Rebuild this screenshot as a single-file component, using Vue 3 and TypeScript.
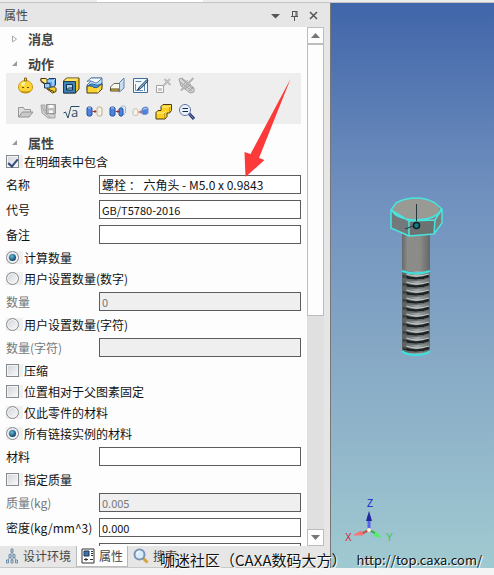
<script setup lang="ts">
import { ref } from 'vue'

interface Shape {
  d: string
  fill?: string
  stroke?: string
  w?: number
}
interface Tool {
  label: string
  glyph?: string
  shapes: Shape[]
}
interface Row {
  id: string
  kind: 'check' | 'radio' | 'text'
  label: string
  value?: string
  checked?: boolean
  disabled?: boolean
  group?: string
  code?: boolean
}

const NAVY = '#1f3a5c'
const OLIVE = '#4a3a10'
const GREY = '#a2a2a2'

const toolRows: Tool[][] = [
  [
    {
      label: '零件',
      shapes: [
        { d: 'M1 10.500l3-1.500v3zM16 10.500l-3-1.500v3z', fill: '#e8c021', stroke: '#8a6a10', w: 1 },
        { d: 'M8.500 3.500C4.500 3.500 1.500 6.500 1.500 10c0 4 3 6 7 6s7-2 7-6c0-3.500-3-6.500-7-6.500z', fill: '#fbd335', stroke: '#c79a1c', w: 1 },
        { d: 'M3 13c3 2 8 2 11 0-1 2-2.500 3-5.500 3S4 15 3 13z', fill: '#b98a12' },
        { d: 'M4 8C4.500 6 6.500 4.800 8.500 4.800L7 9z', fill: '#fff3a8' },
        { d: 'M7.500 1h2v3h-2z', fill: '#fbd335', stroke: '#8a6a10', w: 1 },
        { d: 'M5 10h2v1H5zM10 10h2v1h-2z', fill: '#6b4d08' },
      ],
    },
    {
      label: '装配',
      shapes: [
        { d: 'M1 1.500h5l2 2 8 8v3L12.500 16 7 12V9L1 4.500z', fill: '#f6cf2e', stroke: OLIVE, w: 1 },
        { d: 'M1 1.500h5l2 2v3H5L1 4z', fill: '#ffe873', stroke: OLIVE, w: 1 },
        { d: 'M7 3.500l2-2h6.500V8l-2 2H7z', fill: '#5da5ee', stroke: NAVY, w: 1 },
        { d: 'M7.500 4H13v5M13 4l2-2', stroke: '#d7ebff', w: 1 },
        { d: 'M4.500 6.500H10v4.500H4.500z', fill: '#9ccbf8', stroke: NAVY, w: 1 },
        { d: 'M8 12l6 2.500', stroke: OLIVE, w: 1 },
      ],
    },
    {
      label: '抽壳',
      shapes: [
        { d: 'M.5 4l3-3H16v11l-3.500 4H.5z', fill: '#f5c723', stroke: OLIVE, w: 1 },
        { d: 'M1.500 4L4 1.500h11.500L13 4z', fill: '#ffe868' },
        { d: 'M.5 4.500H12.500V16H.5z', fill: '#3e83b5', stroke: NAVY, w: 1 },
        { d: 'M3.500 7.500h6V13h-6z', fill: '#a9d7ee', stroke: '#12304f', w: 1 },
        { d: 'M3.500 13l2-2h4', stroke: '#12304f', w: 1 },
      ],
    },
    {
      label: '分割',
      shapes: [
        { d: 'M1 8l4-4V1h11v8l-4 4H1z', fill: '#b8dcfa', stroke: '#547ca6', w: 1 },
        { d: 'M1 4.500L5 1h11l-4 4c-3 3-6-3-11-.5z', fill: '#f7fbff', stroke: '#547ca6', w: 1 },
        { d: 'M1 9.500c4-3 7 3 11 0l4-3v5.500l-4 4H1z', fill: '#f9d430', stroke: OLIVE, w: 1 },
        { d: 'M1 9.500l3-2c4-2 6 3 12-1l-4 3.500c-4 2.500-7-3.500-11-.5z', fill: '#4f96dd', stroke: '#285c92', w: 1 },
        { d: 'M12 11v4.500', stroke: '#fff1a0', w: 1 },
      ],
    },
    {
      label: '基准面',
      shapes: [
        { d: 'M1.500 10L5 6.500h6v5L9 13H1.500z', fill: '#fbfbf0', stroke: '#6a6654', w: 1 },
        { d: 'M1.500 12h8.500v2H1.500z', fill: '#f3d354', stroke: '#51441c', w: 1 },
        { d: 'M10.500 5.500L15 1v10l-4.500 4z', fill: '#c6dcf5', stroke: '#6684a5', w: 1 },
      ],
    },
    {
      label: '编辑草图',
      shapes: [
        { d: 'M1.500 1.500h14v14h-14z', fill: '#f5faff', stroke: '#3e6f9c', w: 1 },
        { d: 'M3.500 7v6.500H11', stroke: '#7496b8', w: 1 },
        { d: 'M3.500 4.500h6M12.500 8v6', stroke: '#5687b7', w: 1 },
        { d: 'M15 2.500L7.500 10l-2 3 3.300-1.500L16 4z', fill: '#7daedb', stroke: '#263f59', w: 1 },
      ],
    },
    {
      label: '移动',
      shapes: [
        { d: 'M1.500 8.500h7v7h-7z', fill: '#fafafa', stroke: GREY, w: 1 },
        { d: 'M3 11h4v3H3z', fill: '#c9c9c9' },
        { d: 'M8.500 8.500L15 2M9.500 2l6 6', stroke: '#bdbdbd', w: 2 },
      ],
    },
    {
      label: '隐藏',
      shapes: [
        { d: 'M1 2l3-1 12 10v4l-4 1L3 9z', fill: '#d5d5d5', stroke: GREY, w: 1 },
        { d: 'M2 5l12 9M4 2l11 10M4 9l6-6M7 12l6-5M10 15l5-5', stroke: '#a2a2a2', w: 1 },
        { d: 'M15.500 1L3 13.500', stroke: '#b3b3b3', w: 2 },
      ],
    },
  ],
  [
    {
      label: '打开',
      shapes: [
        { d: 'M1.500 14V4.500h5l1 2h6v3', fill: '#dedede', stroke: '#999', w: 1 },
        { d: 'M1.500 14l4-5H16l-4 5z', fill: '#c9c9c9', stroke: '#929292', w: 1 },
      ],
    },
    {
      label: '保存',
      shapes: [
        { d: 'M1 2h4v5l5 4h5v4H8L2 10z', fill: '#d2d2d2', stroke: '#a5a5a5', w: 1 },
        { d: 'M6.500 1.500h9v9h-9z', fill: '#bcbcbc', stroke: '#959595', w: 1 },
        { d: 'M8.500 2h5v3h-5zM9 7.500h4V10H9z', fill: '#fafafa' },
        { d: 'M2 3l3 7 6 5', stroke: '#a6a6a6', w: 1 },
      ],
    },
    {
      label: '参数表',
      glyph: 'a',
      shapes: [{ d: 'M.5 10l2-1L5 15 8 3.500h8.500', stroke: '#294c66', w: 1 }],
    },
    {
      label: '复制关联',
      shapes: [
        { d: 'M1 5c1-1.500 4-1.500 5 0v7c-1 1.500-4 1.500-5 0z', fill: '#4b83df', stroke: '#2951a1', w: 1 },
        { d: 'M2 5h3', stroke: '#b9d4ff', w: 1 },
        { d: 'M6.500 8.500h4M9 7v3', stroke: '#9b3030', w: 1 },
        { d: 'M11 5c1-1.500 4-1.500 5 0v7c-1 1.500-4 1.500-5 0z', fill: '#f4efe2', stroke: '#bcae92', w: 1 },
      ],
    },
    {
      label: '链接',
      shapes: [
        { d: 'M1 5c1-1.500 4-1.500 5 0v7c-1 1.500-4 1.500-5 0z', fill: '#4b83df', stroke: '#2951a1', w: 1 },
        { d: 'M12 4c1-1.500 4-1.500 4.500 0v6c-1 1.500-3 1.500-4.500 0z', fill: '#dcecf7', stroke: '#9fb7cc', w: 1 },
        { d: 'M10 6c1-1.500 3-1.500 4 0v6c-1 1.500-3 1.500-4 0z', fill: '#4b83df', stroke: '#2951a1', w: 1 },
        { d: 'M2 5h3', stroke: '#b9d4ff', w: 1 },
        { d: 'M6.500 8.500h4M9 7v3', stroke: '#9b3030', w: 1 },
      ],
    },
    {
      label: '断开链接',
      shapes: [
        { d: 'M1 8c0-3 5-3 5 0v3c0 2-5 2-5 0z', fill: '#f6f2e6', stroke: '#c4bba4', w: 1 },
        { d: 'M6.500 9h4M9 7.500v3', stroke: '#ad4747', w: 1 },
        { d: 'M10 6c1-2 6-3 6 0v4c-1 2-6 2-6 0z', fill: '#4b83df', stroke: '#6f8cc1', w: 1 },
        { d: 'M11 6.500c1-1 3-1 4-.5', stroke: '#c4dcff', w: 1 },
      ],
    },
    {
      label: '合并',
      shapes: [
        { d: 'M6 3.500L8 1.500h8.500v6l-2 2.500H12v3.500l-2 2.500H1v-6.500L3 7.500h3z', fill: '#fbd020', stroke: OLIVE, w: 1 },
        { d: 'M7 4h7l2-2M2 10h7l2-2', stroke: '#fff29b', w: 1 },
        { d: 'M14.500 4v5M9.500 10v5', stroke: '#d1a010', w: 1 },
      ],
    },
    {
      label: '查看',
      shapes: [
        { d: 'M11 10.500l5 5.500', stroke: '#25356c', w: 3 },
        { d: 'M11.500 11l4 4.500', stroke: '#7595df', w: 1 },
        { d: 'M7 1.500a5.500 5.500 0 1 0 .01 0z', fill: '#e7f1ff', stroke: '#6272a0', w: 1 },
        { d: 'M4.500 5.500H10M4.500 8.500H10', stroke: '#1f2a40', w: 1 },
      ],
    },
  ],
]

const rows: Row[] = [
  { id: 'bom', kind: 'check', label: '在明细表中包含', checked: true },
  { id: 'name', kind: 'text', label: '名称', value: '螺栓 ： 六角头 - M5.0 x 0.9843' },
  { id: 'code', kind: 'text', label: '代号', value: 'GB/T5780-2016', code: true },
  { id: 'note', kind: 'text', label: '备注', value: '' },
  { id: 'calc', kind: 'radio', label: '计算数量', group: 'count', checked: true },
  { id: 'usernum', kind: 'radio', label: '用户设置数量(数字)', group: 'count' },
  { id: 'num', kind: 'text', label: '数量', value: '0', disabled: true, code: true },
  { id: 'userstr', kind: 'radio', label: '用户设置数量(字符)', group: 'count' },
  { id: 'str', kind: 'text', label: '数量(字符)', value: '', disabled: true },
  { id: 'suppress', kind: 'check', label: '压缩' },
  { id: 'fixed', kind: 'check', label: '位置相对于父图素固定' },
  { id: 'only', kind: 'radio', label: '仅此零件的材料', group: 'material' },
  { id: 'linked', kind: 'radio', label: '所有链接实例的材料', group: 'material', checked: true },
  { id: 'mat', kind: 'text', label: '材料', value: '' },
  { id: 'setmass', kind: 'check', label: '指定质量' },
  { id: 'mass', kind: 'text', label: '质量(kg)', value: '0.005', disabled: true, code: true },
  { id: 'density', kind: 'text', label: '密度(kg/mm^3)', value: '0.000', code: true },
  { id: 'extra', kind: 'text', label: '', value: '' },
]

const activeTab = ref('props')
// One y per thread turn on the bolt shank
const threads = Array.from({ length: 10 }, (_, i) => 81 + i * 8)
</script>

<template>
  <div class="app">
    <div class="strip"><span class="strip-tab"></span></div>
    <main class="main">
      <aside class="panel">
        <header class="title">
          <h1>属性</h1>
          <button type="button" aria-label="选项">
            <svg width="11" height="11" viewBox="0 0 11 11"><path d="M1 4h9L5.500 8.500z" fill="#555" /></svg>
          </button>
          <button type="button" aria-label="固定">
            <svg width="11" height="11" viewBox="0 0 11 11"><path d="M3.500 1v5.500M3 1.500h5M7 1v5.500M8 1v5.500M2 6.500h7M5.500 7v4" fill="none" stroke="#555" /></svg>
          </button>
          <button type="button" aria-label="关闭">
            <svg width="11" height="11" viewBox="0 0 11 11"><path d="M2 2l7 7M9 2L2 9" fill="none" stroke="#555" stroke-width="1.500" /></svg>
          </button>
        </header>

        <div class="body">
          <form class="form" @submit.prevent>
            <h2><svg width="8" height="8" viewBox="0 0 8 8"><path d="M2.500 1L6.500 4l-4 3z" fill="#fff" stroke="#aaa" /></svg>消息</h2>
            <h2><svg width="8" height="8" viewBox="0 0 8 8"><path d="M7 1v5H2z" fill="#999" /></svg>动作</h2>
            <div class="tools">
              <div v-for="(line, n) in toolRows" :key="n" class="tool-row">
                <button v-for="tool in line" :key="tool.label" type="button" :aria-label="tool.label">
                  <svg width="17" height="17" viewBox="0 0 17 17">
                    <path
                      v-for="(s, i) in tool.shapes"
                      :key="i"
                      :d="s.d"
                      :fill="s.fill ?? 'none'"
                      :stroke="s.stroke ?? 'none'"
                      :stroke-width="s.w ?? 0"
                    />
                    <text v-if="tool.glyph" x="8" y="14" class="glyph">{{ tool.glyph }}</text>
                  </svg>
                </button>
              </div>
            </div>
            <h2><svg width="8" height="8" viewBox="0 0 8 8"><path d="M7 1v5H2z" fill="#999" /></svg>属性</h2>

            <template v-for="row in rows" :key="row.id">
              <div v-if="row.kind === 'text'" class="field" :class="{ off: row.disabled, code: row.code }">
                <label :for="row.id">{{ row.label }}</label>
                <input :id="row.id" type="text" :value="row.value" :disabled="row.disabled" />
              </div>
              <div v-else class="toggle">
                <span class="box">
                  <input
                    :id="row.id"
                    :type="row.kind === 'check' ? 'checkbox' : 'radio'"
                    :name="row.group ?? row.id"
                    :checked="row.checked"
                  />
                </span>
                <label :for="row.id">{{ row.label }}</label>
              </div>
            </template>
          </form>

          <div class="scroll">
            <button type="button" aria-label="向上滚动">
              <svg width="9" height="5" viewBox="0 0 9 5"><path d="M0 5h9L4.500 0z" fill="#777" /></svg>
            </button>
            <div class="track"><div class="thumb"></div></div>
            <button type="button" aria-label="向下滚动">
              <svg width="9" height="5" viewBox="0 0 9 5"><path d="M0 0h9L4.500 5z" fill="#777" /></svg>
            </button>
          </div>
        </div>

        <nav class="tabs">
          <button type="button" :class="{ active: activeTab === 'env' }" @click="activeTab = 'env'">
            <svg width="14" height="16" viewBox="0 0 14 16">
              <path d="M7 3L3 13M7 3l4 10M5 8h4M5 8l2 5M9 8l-2 5" fill="none" stroke="#7a94ab" />
              <path d="M6 1h2v3H6zM4 6.500h2v3H4zM8 6.500h2v3H8zM1.500 12h2v3h-2zM6 12h2v3H6zM10.500 12h2v3h-2z" fill="#c6dceb" stroke="#6f8ea8" />
            </svg>设计环境
          </button>
          <button type="button" :class="{ active: activeTab === 'props' }" @click="activeTab = 'props'">
            <svg width="14" height="16" viewBox="0 0 14 16">
              <path d="M1 1h12v14H1z" fill="#fdfdfd" stroke="#333" />
              <path d="M3 3h5v5H3z" fill="#3c73ad" stroke="#1d3653" />
              <path d="M10 3.500h2M10 5.500h2M10 7.500h2M9 11.500h3M3 11.500h4M5 10v3" fill="none" stroke="#333" />
            </svg>属性
          </button>
          <button type="button" :class="{ active: activeTab === 'find' }" @click="activeTab = 'find'">
            <svg width="16" height="16" viewBox="0 0 16 16">
              <path d="M10 10l4.500 4.500" stroke="#d6a23a" stroke-width="3" />
              <circle cx="6.500" cy="6.500" r="5" fill="#d7ebfb" stroke="#7893b5" stroke-width="2" />
              <path d="M4 6c0-2 1.500-3 3-3" fill="none" stroke="#fff" />
            </svg>搜索
          </button>
        </nav>
      </aside>

      <section class="scene" aria-label="三维视图">
        <svg class="bolt" width="60" height="166" viewBox="0 0 60 166">
          <defs>
            <linearGradient id="shank">
              <stop offset="0" stop-color="#65696b" />
              <stop offset=".2" stop-color="#8c8d8a" />
              <stop offset=".65" stop-color="#8b8b87" />
              <stop offset="1" stop-color="#626767" />
            </linearGradient>
            <linearGradient id="thread">
              <stop offset="0" stop-color="#5b6060" />
              <stop offset=".2" stop-color="#6f7474" />
              <stop offset=".55" stop-color="#a2a7a7" />
              <stop offset="1" stop-color="#6a7070" />
            </linearGradient>
          </defs>
          <path d="M15 36h28v44H15z" fill="url(#shank)" />
          <path d="M15 78h28v80q-14 6-28 0z" fill="url(#thread)" />
          <g v-for="y in threads" :key="y" fill="none">
            <path :d="`M19 ${y}q11 4 23 0`" stroke="#c3c8c8" />
            <path :d="`M16 ${y + 2}q13 5 26 0`" stroke="#1d2122" stroke-width="2.500" />
            <path :d="`M15 ${y + 4}q13 5 27 0`" stroke="#5f6666" />
          </g>
          <path d="M18 80v76" stroke="#5c6262" stroke-width="3" opacity=".6" />
          <path d="M15 78q14 5 28 0M15 158q4 4 14 4t14-4" fill="none" stroke="#3fe0dc" stroke-width="2" />
          <path d="M4 17L22 28v15L4 35z" fill="#73797a" />
          <path d="M22 28l26-1-1 14-25 2z" fill="#6c7172" />
          <path d="M48 27l7-11v14l-8 11z" fill="#797e7e" />
          <path d="M4 17l7-8 17-4 19 4 8 7-7 11-26 1z" fill="#85898a" />
          <ellipse cx="29" cy="16" rx="23" ry="11" fill="#9a9a95" />
          <path d="M4 17l5-7q9-5 20-5t19 5l7 6v14l-8 11-25 2L4 35zM22 28v15M48 27l-1 14M4 17l18 11 26-1 7-11M5 17q3 9 24 10 22-1 25-11" fill="none" stroke="#48e5e0" stroke-width="1.500" />
          <path d="M29.500 11v17M18 36l8-3" stroke="#23383d" fill="none" />
          <circle cx="29.500" cy="32.500" r="3" fill="#167e89" stroke="#0a2227" stroke-width="1.500" />
        </svg>
        <svg class="triad" width="50" height="50" viewBox="0 0 50 50">
          <path d="M24 34V18" stroke="#5964ed" stroke-width="3" />
          <path d="M24 13l3 10h-6z" fill="#23279f" />
          <path d="M24 32l-8 4" stroke="#bd504d" stroke-width="2" />
          <path d="M9 37l7-4 2 4z" fill="#ff7170" stroke="#f17979" />
          <path d="M24 32l8 4" stroke="#43aa57" stroke-width="2" />
          <path d="M29 38l2-4 5 5z" fill="#53f169" stroke="#5be971" />
          <circle cx="24" cy="32" r="2" fill="#fff5d6" />
          <text x="22" y="9" fill="#1620cc">Z</text>
          <text x="0" y="43" fill="#d42638">X</text>
          <text x="41" y="43" fill="#36c755">Y</text>
        </svg>
      </section>
    </main>
    <footer class="status"></footer>

    <svg class="pointer" width="48" height="98" viewBox="0 0 48 98" aria-hidden="true">
      <path d="M46.500 0L15 79l5.500 2L1.500 98 .5 73l6 2z" fill="#fb3a39" />
    </svg>
    <p class="credit"><span>咖迷社区（CAXA数码大方）</span><a href="http://top.caxa.com/">http://top.caxa.com/</a></p>
  </div>
</template>

<style>
body {
  margin: 0;
}
</style>

<style scoped>
.app {
  position: relative;
  display: flex;
  flex-direction: column;
  height: 100vh;
  overflow: hidden;
  background: #f4f4f4;
  color: #111;
  font: 12px/16px "Noto Sans CJK SC", sans-serif;
}
.app * {
  box-sizing: border-box;
}
button {
  display: flex;
  align-items: center;
  justify-content: center;
  margin: 0;
  padding: 0;
  border: 0;
  background: none;
  color: inherit;
  font: inherit;
}
svg {
  display: block;
  flex: none;
}
h1,
h2,
p {
  margin: 0;
}
.strip {
  flex: 0 0 3px;
  padding-left: 97px;
  border-bottom: 1px solid #c4c4c4;
  background: #ececec;
}
.strip-tab {
  display: block;
  width: 106px;
  height: 2px;
  background: #fff;
}
.main {
  display: flex;
  flex: 1;
  min-height: 0;
}
.panel {
  display: flex;
  flex: 0 0 330px;
  flex-direction: column;
  min-width: 0;
  background: #e6e6e6;
}
.title {
  display: flex;
  flex: 0 0 24px;
  align-items: center;
  gap: 8px;
  padding: 0 11px 0 4px;
}
.title h1 {
  flex: 1;
  color: #444;
  font-size: 12px;
  font-weight: 400;
}
.body {
  display: flex;
  flex: 1;
  min-height: 0;
  margin-right: 6px;
}
.form {
  display: flex;
  flex: 1;
  flex-direction: column;
  min-width: 0;
  padding: 4px 6px 0;
  overflow: hidden;
  background: #fdfdfd;
}
.form > * {
  flex-shrink: 0;
}
h2 {
  display: flex;
  align-items: center;
  gap: 10px;
  height: 16px;
  margin-top: 9px;
  padding-left: 4px;
  color: #444;
  font-size: 13px;
  font-weight: 700;
}
h2:first-child {
  margin-top: 0;
}
.tools {
  display: flex;
  flex-direction: column;
  gap: 1px;
  margin: 1px 0 2px;
  padding-left: 8px;
  background: #eee;
}
.tool-row {
  display: flex;
}
.tool-row button {
  width: 23px;
  height: 25px;
}
.glyph {
  fill: #294c66;
  font: 13px "Open Sans", sans-serif;
}
.field {
  display: flex;
  align-items: center;
  height: 25px;
}
.field label {
  width: 93px;
  white-space: nowrap;
}
.field input {
  flex: 1;
  min-width: 0;
  height: 19px;
  padding: 0 2px;
  border: 1px solid #5c5c5c;
  border-radius: 0;
  background: #fff;
  color: #111;
  font: inherit;
}
.code input {
  font-size: 11px;
}
.off label,
.off input {
  color: #777;
}
.off input {
  background: #efefef;
}
.toggle {
  display: flex;
  align-items: center;
  height: 21px;
}
.box {
  width: 17px;
  height: 13px;
  margin-right: 1px;
  background: #f0f0f0;
}
.box input {
  display: grid;
  place-items: center;
  width: 13px;
  height: 13px;
  margin: 0;
  border: 1px solid #858a8f;
  background: linear-gradient(135deg, #cfd3d8, #fafafa);
  box-shadow: inset 0 0 0 1px #f4f4f4;
  appearance: none;
}
.box input[type="radio"] {
  border-radius: 50%;
}
.box input[type="radio"]:checked::after {
  width: 7px;
  height: 7px;
  border-radius: 50%;
  background: radial-gradient(circle at 40% 35%, #62bfe2, #134667 70%);
  content: "";
}
.box input[type="checkbox"]:checked::after {
  width: 4px;
  height: 8px;
  border: solid #34497e;
  border-width: 0 2px 2px 0;
  content: "";
  transform: rotate(40deg);
}
.scroll {
  display: flex;
  flex: 0 0 17px;
  flex-direction: column;
  background: #e0e0e0;
}
.scroll button {
  height: 17px;
  border: 1px solid #bdbdbd;
  background: #fdfdfd;
}
.track {
  flex: 1;
}
.thumb {
  height: 56%;
  border: 1px solid #bdbdbd;
  background: #fdfdfd;
}
.tabs {
  display: flex;
  flex: 0 0 22px;
  border-bottom: 1px solid #c9c9c9;
  color: #444;
}
.tabs button {
  gap: 4px;
  padding: 0 4px;
  border: 1px solid transparent;
  border-top: 0;
}
.tabs .active {
  border-color: #bbb;
  background: #fdfdfd;
}
.scene {
  position: relative;
  flex: 1;
  min-width: 0;
  border-left: 1px solid #777;
  background: linear-gradient(#4065a9, #6f90be 33%, #86a8c5 62%, #a0cad1);
}
.bolt {
  position: absolute;
  top: 190px;
  left: 56px;
}
.triad {
  position: absolute;
  bottom: 20px;
  left: 14px;
  font: 10px "Liberation Sans", sans-serif;
}
.status {
  flex: 0 0 7px;
  background: #f4f4f4;
}
.pointer {
  position: absolute;
  top: 79px;
  left: 244px;
}
.credit {
  position: absolute;
  bottom: 5px;
  left: 160px;
  display: flex;
  gap: 10px;
  color: #111;
  font-size: 15px;
  line-height: 20px;
  white-space: nowrap;
  text-shadow: 1px 1px 0 #fff;
}
.credit a {
  color: inherit;
  font-size: 13px;
  text-decoration: none;
}
</style>
